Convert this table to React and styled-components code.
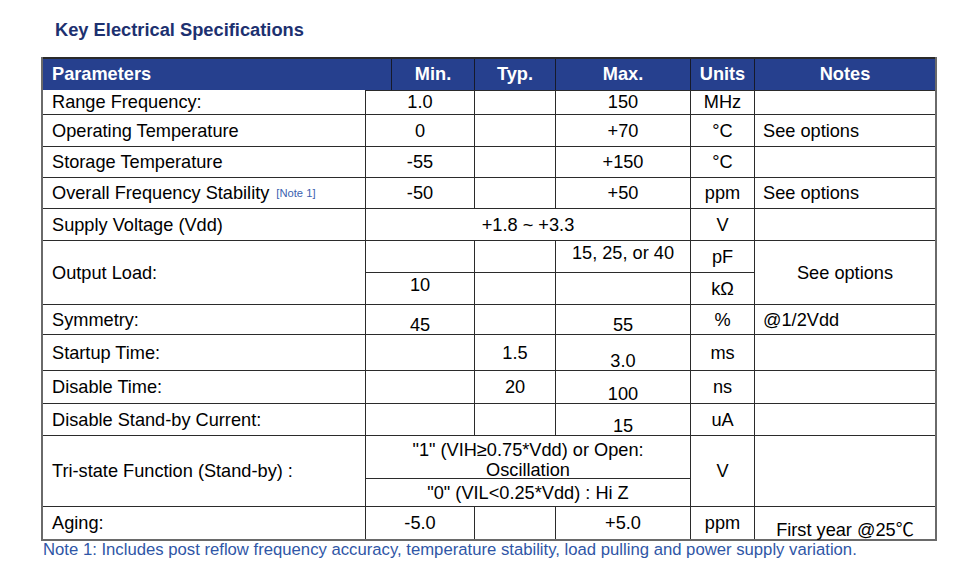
import React from 'react';
import styled, { createGlobalStyle } from 'styled-components';

const Global = createGlobalStyle`
  html, body { margin: 0; padding: 0; background: #fff; }
  body { font-family: "Liberation Sans", Arial, "Noto Sans CJK SC", sans-serif; }
`;

const Page = styled.div`
  box-sizing: border-box;
  width: 960px;
  height: 583px;
  padding: 19px 0 0 41px;
  background: #fff;
`;

const Title = styled.h2`
  margin: 0 0 0 14px;
  font-size: 18.3px;
  line-height: 21px;
  font-weight: 700;
  color: #1d3170;
`;

const Table = styled.div`
  box-sizing: border-box;
  width: 896px;
  margin-top: 17px;
  border-left: 2px solid #6a6a6a;
  border-right: 2px solid #6a6a6a;
  border-bottom: 2px solid #6a6a6a;
`;

const Header = styled.div`
  box-sizing: border-box;
  display: grid;
  grid-template-columns: 349px 83px 81px 135px 64px 180px;
  height: 33px;
  border-top: 2px solid #2a2a2a;
  background: #26408e;
`;

const HeadCell = styled.div`
  display: flex;
  align-items: center;
  justify-content: ${p => (p.$left ? 'flex-start' : 'center')};
  padding-left: ${p => (p.$left ? '9px' : '0')};
  border-right: ${p => (p.$last ? 'none' : '1px solid #161a2a')};
  color: #fff;
  font-size: 18.2px;
  font-weight: 700;
`;

const Body = styled.div`
  display: grid;
  grid-template-columns: 323px 109px 81px 135px 64px 180px;
  grid-template-rows: 25px 32px 31px 31px 32px 32px 32px 30px 36px 33px 32px 43px 28px 32px;
`;

const alignMap = { start: 'flex-start', end: 'flex-end', center: 'center' };

const Cell = styled.div`
  box-sizing: border-box;
  display: flex;
  grid-column: span ${p => p.$span || 1};
  grid-row: span ${p => p.$rows || 1};
  align-items: ${p => alignMap[p.$v || 'center']};
  justify-content: ${p => (p.$h === 'left' ? 'flex-start' : 'center')};
  text-align: ${p => (p.$h === 'left' ? 'left' : 'center')};
  padding: ${p => p.$pt || 0}px 0 0 ${p => (p.$h === 'left' ? p.$pl ?? 9 : 0)}px;
  border-right: ${p => (p.$lastCol ? 'none' : '1px solid #2b2b2b')};
  border-bottom: ${p => (p.$lastRow ? 'none' : '1px solid #2b2b2b')};
  box-shadow: ${p => (p.$top ? 'inset 0 1px 0 #2b2b2b' : 'none')};
  font-size: 18.2px;
  line-height: ${p => p.$lh || 18}px;
  color: #000;
  white-space: nowrap;
`;

const NoteRef = styled.sup`
  margin-left: 7px;
  font-size: 11.2px;
  line-height: 11px;
  color: #3a5fb0;
  vertical-align: 7px;
`;

const Footnote = styled.p`
  margin: 0;
  padding-left: 2px;
  font-size: 16.7px;
  line-height: 17px;
  color: #2f56a6;
  white-space: nowrap;
`;

const P = (props) => <Cell $h="left" {...props} />;
const V = (props) => <Cell {...props} />;
const N = (props) => <Cell $h="left" $pl={8} $lastCol {...props} />;

export default function App() {
  return (
    <Page>
      <Global />
      <Title>Key Electrical Specifications</Title>
      <Table>
        <Header>
          <HeadCell $left>Parameters</HeadCell>
          <HeadCell>Min.</HeadCell>
          <HeadCell>Typ.</HeadCell>
          <HeadCell>Max.</HeadCell>
          <HeadCell>Units</HeadCell>
          <HeadCell $last>Notes</HeadCell>
        </Header>
        <Body>
          <P>Range Frequency:</P>
          <V $top>1.0</V>
          <V $top />
          <V $top>150</V>
          <V $top>MHz</V>
          <N $top />

          <P>Operating Temperature</P>
          <V>0</V>
          <V />
          <V>+70</V>
          <V>°C</V>
          <N>See options</N>

          <P>Storage Temperature</P>
          <V>-55</V>
          <V />
          <V>+150</V>
          <V>°C</V>
          <N />

          <P>
            Overall Frequency Stability<NoteRef>[Note 1]</NoteRef>
          </P>
          <V>-50</V>
          <V />
          <V>+50</V>
          <V>ppm</V>
          <N>See options</N>

          <P>Supply Voltage (Vdd)</P>
          <V $span={3}>+1.8 ~ +3.3</V>
          <V>V</V>
          <N />

          <P $rows={2}>Output Load:</P>
          <V />
          <V />
          <V $v="start" $pt={3}>15, 25, or 40</V>
          <V>pF</V>
          <Cell $rows={2} $lastCol>See options</Cell>
          <V $v="start" $pt={3}>10</V>
          <V />
          <V />
          <V>kΩ</V>

          <P>Symmetry:</P>
          <V $v="end">45</V>
          <V />
          <V $v="end">55</V>
          <V>%</V>
          <N>@1/2Vdd</N>

          <P>Startup Time:</P>
          <V />
          <V>1.5</V>
          <V $v="end">3.0</V>
          <V>ms</V>
          <N />

          <P>Disable Time:</P>
          <V />
          <V>20</V>
          <V $v="end">100</V>
          <V>ns</V>
          <N />

          <P>Disable Stand-by Current:</P>
          <V />
          <V />
          <V $v="end">15</V>
          <V>uA</V>
          <N />

          <P $rows={2}>Tri-state Function (Stand-by) :</P>
          <V $span={3} $lh={20} $pt={5}>
            "1" (VIH≥0.75*Vdd) or Open:
            <br />
            Oscillation
          </V>
          <V $rows={2}>V</V>
          <N $rows={2} />
          <V $span={3}>"0" (VIL&lt;0.25*Vdd) : Hi Z</V>

          <P $lastRow>Aging:</P>
          <V $lastRow>-5.0</V>
          <V $lastRow />
          <V $lastRow>+5.0</V>
          <V $lastRow>ppm</V>
          <Cell $lastRow $lastCol $v="end">First year @25℃</Cell>
        </Body>
      </Table>
      <Footnote>
        Note 1: Includes post reflow frequency accuracy, temperature stability, load pulling and power supply variation.
      </Footnote>
    </Page>
  );
}
